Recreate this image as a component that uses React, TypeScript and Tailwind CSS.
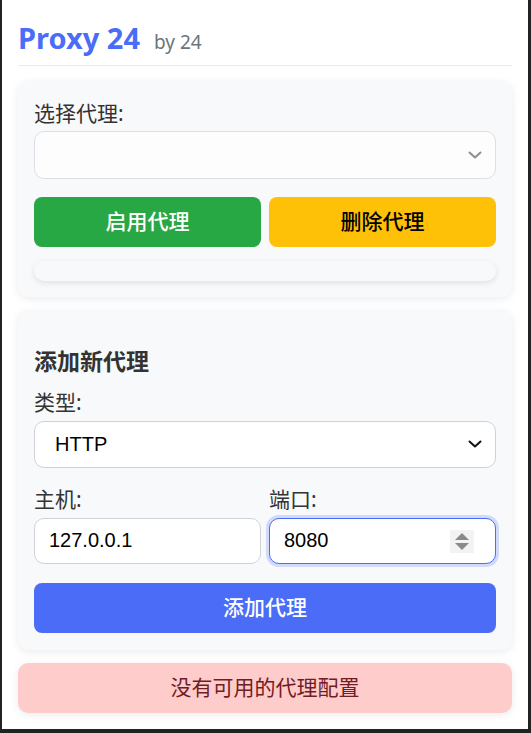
import { useState } from "react";

const CJK = "font-['Noto_Sans','Noto_Sans_CJK_SC',sans-serif]";
const LATIN = "font-['Liberation_Sans',Arial,'Noto_Sans_CJK_SC',sans-serif]";

function Chevron({ color }: { color: string }) {
  return (
    <svg
      viewBox="0 0 14 8"
      className="pointer-events-none absolute right-[14px] top-1/2 h-[8px] w-[14px] -translate-y-1/2"
      fill="none"
      stroke={color}
      strokeWidth="2"
      strokeLinecap="round"
      strokeLinejoin="round"
    >
      <path d="M1.5 1.5 7 6.5l5.5-5" />
    </svg>
  );
}

export default function App() {
  const [type, setType] = useState("http");
  const [host, setHost] = useState("127.0.0.1");
  const [port, setPort] = useState("8080");

  return (
    <div className="flex h-[733px] w-[531px] bg-[#222222] pb-[4px] pl-[2px] pr-[3px]">
      <div className={`flex flex-1 flex-col bg-white px-4 ${CJK} text-[#333]`}>
        <header className="flex items-baseline gap-[14px] border-b border-[#e9ecef] pb-[8px] pt-[20px]">
          <h1 className="text-[29px] font-bold leading-[36px] text-[#4a6cf7]">
            Proxy 24
          </h1>
          <span className="text-[19px] text-[#6c757d]">by 24</span>
        </header>

        <section className="mt-[15px] rounded-[10px] bg-[#f8f9fa] p-4 shadow-[0_2px_8px_rgba(0,0,0,0.08)]">
          <label className="block pt-[3px] text-[21px] leading-[26px]">选择代理:</label>
          <div className="relative mt-[5px]">
            <select
              disabled
              className="h-[48px] w-full appearance-none rounded-[10px] border border-[#dcdfe4] bg-[#fdfdfd] px-3 text-[20px]"
            ></select>
            <Chevron color="#8e8e8e" />
          </div>
          <div className="mt-[18px] grid grid-cols-2 gap-2">
            <button className="h-[50px] rounded-[8px] bg-[#28a745] text-[21px] font-medium text-white">
              启用代理
            </button>
            <button className="h-[50px] rounded-[8px] bg-[#ffc107] text-[21px] font-medium text-black">
              删除代理
            </button>
          </div>
          <div className="mt-[14px] h-[20px] rounded-full bg-[#f8f9fa] shadow-[0_2px_6px_rgba(0,0,0,0.1)]" />
        </section>

        <section className="mt-[13px] rounded-[10px] bg-[#f8f9fa] px-4 pb-[17px] pt-[36px] shadow-[0_2px_8px_rgba(0,0,0,0.08)]">
          <h2 className="text-[23px] font-bold leading-[30px]">添加新代理</h2>
          <label className="mt-[13px] block text-[21px] leading-[26px]">类型:</label>
          <div className="relative mt-[6px]">
            <select
              value={type}
              onChange={(e) => setType(e.target.value)}
              className={`h-[47px] w-full appearance-none rounded-[10px] border border-[#cfd3d8] bg-white pl-[20px] pr-8 ${LATIN} text-[20px] text-black`}
            >
              <option value="http">HTTP</option>
              <option value="socks5">SOCKS5</option>
            </select>
            <Chevron color="#111" />
          </div>
          <div className="mt-[18px] grid grid-cols-2 gap-2">
            <div>
              <label className="block text-[21px] leading-[26px]">主机:</label>
              <input
                value={host}
                onChange={(e) => setHost(e.target.value)}
                className={`mt-[6px] h-[46px] w-full rounded-[10px] border border-[#cfd3d8] bg-white px-[14px] ${LATIN} text-[20px] text-black outline-none`}
              />
            </div>
            <div>
              <label className="block text-[21px] leading-[26px]">端口:</label>
              <div className="relative mt-[6px]">
                <input
                  type="number"
                  value={port}
                  onChange={(e) => setPort(e.target.value)}
                  className={`h-[46px] w-full rounded-[10px] border border-[#4a6cf7] bg-white pl-[14px] pr-[40px] ${LATIN} text-[20px] text-black shadow-[0_0_0_3px_rgba(74,108,247,0.22)] outline-none [appearance:textfield] [&::-webkit-inner-spin-button]:appearance-none [&::-webkit-outer-spin-button]:appearance-none`}
                />
                <div className="pointer-events-none absolute right-[22px] top-[12px] flex h-[23px] w-[24px] flex-col items-center justify-center gap-[3px] bg-[#f3f3f3]">
                  <svg viewBox="0 0 14 7" className="h-[7px] w-[14px]" fill="#8a8a8a">
                    <path d="M7 0 14 7H0z" />
                  </svg>
                  <svg viewBox="0 0 14 7" className="h-[7px] w-[14px]" fill="#8a8a8a">
                    <path d="M0 0h14L7 7z" />
                  </svg>
                </div>
              </div>
            </div>
          </div>
          <button className="mt-[19px] h-[50px] w-full rounded-[8px] bg-[#4a6cf7] text-[21px] font-medium text-white">
            添加代理
          </button>
        </section>

        <div className="mt-[13px] flex h-[50px] items-center justify-center rounded-[10px] bg-[#ffcccc] text-[21px] text-[#721c24] shadow-[0_2px_8px_rgba(0,0,0,0.08)]">
          没有可用的代理配置
        </div>
      </div>
    </div>
  );
}
